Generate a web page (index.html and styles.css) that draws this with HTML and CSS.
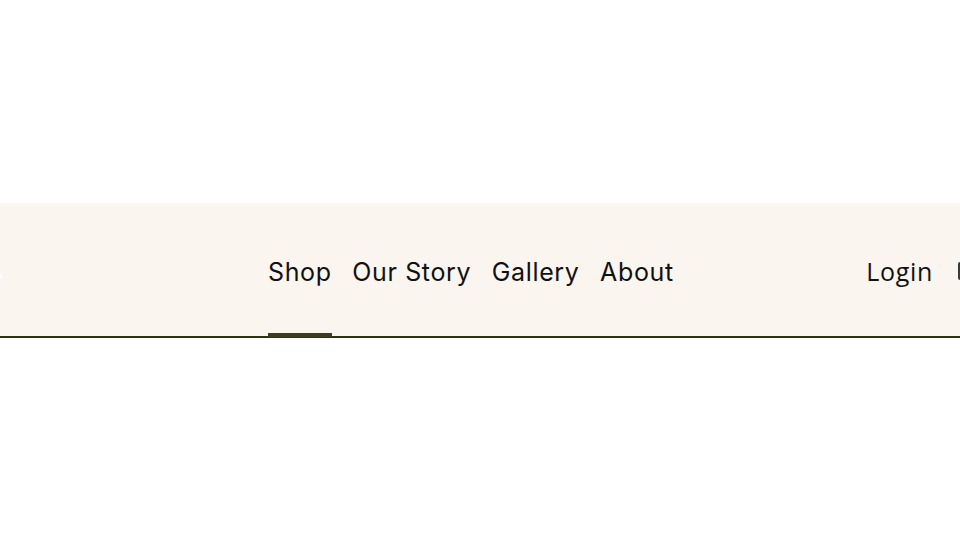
FILE: index.html
```html
<!DOCTYPE html>
<html lang="en">
<head>
    <meta charset="UTF-8">
    <title>Shop</title>
    <link rel="stylesheet" href="styles.css">
</head>
<body>
    <header class="site-header">
        <div class="logo-area">
            <span class="logo-mark"></span>
        </div>
        <nav class="main-nav">
            <a class="nav-link active" href="#">Shop</a>
            <a class="nav-link" href="#">Our Story</a>
            <a class="nav-link" href="#">Gallery</a>
            <a class="nav-link" href="#">About</a>
        </nav>
        <div class="account-nav">
            <a class="nav-link login-link" href="#">Login</a>
            <div class="cart-edge"></div>
        </div>
    </header>
</body>
</html>
```

FILE: styles.css
```css
html, body {
    margin: 0;
    height: 538px;
    overflow: hidden;
    background-color: #fff;
}
body {
    padding-top: 203px;
    box-sizing: border-box;
    font-family: Inter, "Liberation Sans", sans-serif;
}
.site-header {
    display: flex;
    align-items: stretch;
    height: 133px;
    background-color: #faf5ef;
    border-bottom: 2px solid #2f3018;
}
.logo-area {
    display: flex;
    align-items: center;
    width: 268px;
    padding-top: 12px;
    box-sizing: border-box;
    flex-shrink: 0;
}
.logo-mark {
    width: 3px;
    height: 6px;
    background-color: #fff;
    clip-path: polygon(0 0, 100% 100%, 0 100%);
}
.main-nav {
    display: flex;
    gap: 20.5px;
}
.nav-link {
    display: flex;
    align-items: center;
    padding-top: 8px;
    color: #111;
    font-size: 25px;
    font-weight: 400;
    letter-spacing: 0.65px;
    text-decoration: none;
    border-bottom: 4px solid transparent;
    margin-bottom: -1px;
    box-sizing: border-box;
}
.nav-link.active {
    border-bottom-color: #3b3c20;
}
.login-link {
    padding-top: 6px;
    font-family: "Open Sans", "Liberation Sans", sans-serif;
    letter-spacing: 0.7px;
}
.account-nav {
    display: flex;
    align-items: stretch;
    margin-left: auto;
    gap: 25px;
}
.cart-edge {
    align-self: center;
    width: 2px;
    height: 18px;
    margin-top: 2px;
    background-color: #3a3a3a;
    border-radius: 2px 0 0 2px;
}
```
